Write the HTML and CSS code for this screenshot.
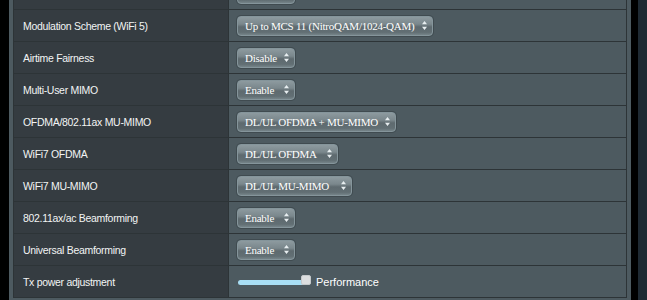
FILE: index.html
```html
<!DOCTYPE html>
<html>
<head>
<meta charset="utf-8">
<link rel="stylesheet" href="styles.css">
</head>
<body>
<div class="page">
  <div class="panel">
    <div class="table">
      <div class="label"></div>
      <div class="value"><div class="sel sel-onoff"><span>Enable</span><svg class="arr" viewBox="0 0 5 9" width="5" height="9"><path d="M2.5 0 L5 3.2 L0 3.2 Z M2.5 9 L5 5.8 L0 5.8 Z" fill="#e8eef0"/></svg></div></div>

      <div class="label">Modulation Scheme (WiFi 5)</div>
      <div class="value"><div class="sel sel-mcs"><span>Up to MCS 11 (NitroQAM/1024-QAM)</span><svg class="arr" viewBox="0 0 5 9" width="5" height="9"><path d="M2.5 0 L5 3.2 L0 3.2 Z M2.5 9 L5 5.8 L0 5.8 Z" fill="#e8eef0"/></svg></div></div>

      <div class="label">Airtime Fairness</div>
      <div class="value"><div class="sel sel-onoff"><span>Disable</span><svg class="arr" viewBox="0 0 5 9" width="5" height="9"><path d="M2.5 0 L5 3.2 L0 3.2 Z M2.5 9 L5 5.8 L0 5.8 Z" fill="#e8eef0"/></svg></div></div>

      <div class="label">Multi-User MIMO</div>
      <div class="value"><div class="sel sel-onoff"><span>Enable</span><svg class="arr" viewBox="0 0 5 9" width="5" height="9"><path d="M2.5 0 L5 3.2 L0 3.2 Z M2.5 9 L5 5.8 L0 5.8 Z" fill="#e8eef0"/></svg></div></div>

      <div class="label">OFDMA/802.11ax MU-MIMO</div>
      <div class="value"><div class="sel sel-ofdma-mu"><span>DL/UL OFDMA + MU-MIMO</span><svg class="arr" viewBox="0 0 5 9" width="5" height="9"><path d="M2.5 0 L5 3.2 L0 3.2 Z M2.5 9 L5 5.8 L0 5.8 Z" fill="#e8eef0"/></svg></div></div>

      <div class="label">WiFi7 OFDMA</div>
      <div class="value"><div class="sel sel-ofdma"><span>DL/UL OFDMA</span><svg class="arr" viewBox="0 0 5 9" width="5" height="9"><path d="M2.5 0 L5 3.2 L0 3.2 Z M2.5 9 L5 5.8 L0 5.8 Z" fill="#e8eef0"/></svg></div></div>

      <div class="label">WiFi7 MU-MIMO</div>
      <div class="value"><div class="sel sel-mu"><span>DL/UL MU-MIMO</span><svg class="arr" viewBox="0 0 5 9" width="5" height="9"><path d="M2.5 0 L5 3.2 L0 3.2 Z M2.5 9 L5 5.8 L0 5.8 Z" fill="#e8eef0"/></svg></div></div>

      <div class="label">802.11ax/ac Beamforming</div>
      <div class="value"><div class="sel sel-onoff"><span>Enable</span><svg class="arr" viewBox="0 0 5 9" width="5" height="9"><path d="M2.5 0 L5 3.2 L0 3.2 Z M2.5 9 L5 5.8 L0 5.8 Z" fill="#e8eef0"/></svg></div></div>

      <div class="label">Universal Beamforming</div>
      <div class="value"><div class="sel sel-onoff"><span>Enable</span><svg class="arr" viewBox="0 0 5 9" width="5" height="9"><path d="M2.5 0 L5 3.2 L0 3.2 Z M2.5 9 L5 5.8 L0 5.8 Z" fill="#e8eef0"/></svg></div></div>

      <div class="label">Tx power adjustment</div>
      <div class="value">
        <div class="slider"><div class="track"></div><div class="thumb"></div></div>
        <span class="perf">Performance</span>
      </div>
    </div>
  </div>
  <div class="gap"></div>
  <div class="side"></div>
</div>
</body>
</html>
```

FILE: styles.css
```css
html, body {
  margin: 0;
  padding: 0;
  background: #000;
  height: 300px;
  overflow: hidden;
}
.page {
  display: flex;
  height: 300px;
  padding-left: 9px;
}
.panel {
  width: 614px;
  padding: 0 4px;
  background: #4d5a60;
  flex: none;
}
.gap {
  width: 7px;
  background: #000;
  flex: none;
}
.side {
  flex: 1;
  background: #1f2a33;
}
.table {
  margin-top: -23px;
  display: grid;
  grid-template-columns: 214px 397px;
  grid-auto-rows: 31px;
  gap: 1px;
  background: #2d3437;
  border: 1px solid #2d3437;
}
.label {
  background: #353c41;
  color: #f2f4f4;
  font-family: "Liberation Sans", Arial, sans-serif;
  font-size: 10.5px;
  letter-spacing: -0.3px;
  display: flex;
  align-items: center;
  padding-left: 9px;
  white-space: nowrap;
}
.value {
  background: #4d5a60;
  display: flex;
  align-items: center;
  padding-left: 8px;
}
.sel {
  box-sizing: border-box;
  height: 20px;
  display: flex;
  align-items: center;
  justify-content: space-between;
  padding: 0 5px 0 7px;
  border: 1px solid #85959b;
  border-radius: 4px;
  background: linear-gradient(to bottom, #8d9a9f 0%, #7a878c 40%, #5e6a6f 55%, #626f74 85%, #758388 100%);
  box-shadow: 0 0 0 1px rgba(40, 48, 52, 0.35);
  color: #fff;
  font-family: "Liberation Serif", "Times New Roman", serif;
  font-size: 11px;
  letter-spacing: -0.25px;
  white-space: nowrap;
}
.arr { flex: none; }
.sel-onoff { width: 58px; }
.sel-mcs { width: 196px; }
.sel-ofdma-mu { width: 159px; }
.sel-ofdma { width: 101px; }
.sel-mu { width: 115px; }
.slider {
  position: relative;
  width: 74px;
  height: 12px;
  margin-left: 1px;
}
.track {
  position: absolute;
  left: 0;
  top: 4px;
  width: 70px;
  height: 5px;
  border-radius: 3px;
  background: #a8def4;
}
.thumb {
  position: absolute;
  left: 63px;
  top: -1px;
  width: 10px;
  height: 10px;
  border-radius: 2px;
  background: #dcdedf;
  border: 1px solid #c4c8ca;
  box-sizing: border-box;
}
.perf {
  margin-left: 4px;
  color: #fff;
  font-family: "Liberation Sans", Arial, sans-serif;
  font-size: 11px;
}
```
